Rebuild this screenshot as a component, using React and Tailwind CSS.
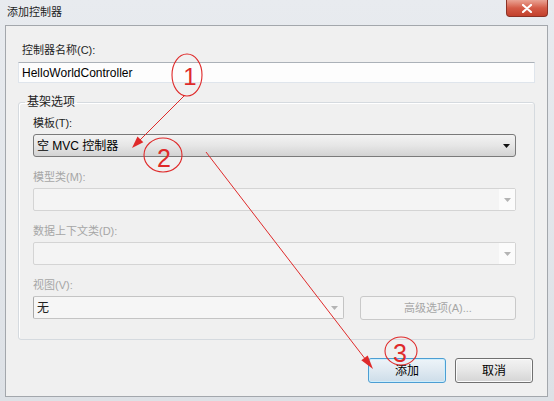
import React from "react";

const cjk = "font-['Liberation_Sans','Noto_Sans_CJK_SC',sans-serif]";

function Caret({ color }) {
  return (
    <svg width="7" height="4" viewBox="0 0 7 4">
      <polygon points="0,0 7,0 3.5,4" fill={color} />
    </svg>
  );
}

function Label({ children, disabled }) {
  return (
    <div
      className={`h-[16px] text-[11px] leading-[16px] ${
        disabled ? "text-[#a6a6a6]" : "text-[#1e1e1e]"
      }`}
    >
      {children}
    </div>
  );
}

function DisabledCombo() {
  return (
    <div className="mt-[3px] flex h-[23px] rounded-[2px] border border-[#d4d4d4] bg-[#f4f4f4]">
      <div className="flex-1" />
      <div className="flex w-[16px] items-center justify-center bg-[#fbfbfb]">
        <Caret color="#b4b4b4" />
      </div>
    </div>
  );
}

function Annotations() {
  const red = "#df2a2a";
  return (
    <svg
      className="pointer-events-none absolute inset-0"
      width="554"
      height="401"
      viewBox="0 0 554 401"
    >
      <ellipse cx="187" cy="75" rx="15" ry="21" fill="none" stroke={red} strokeWidth="1.1" />
      <text x="190" y="85" fontSize="24" fill={red} textAnchor="middle" fontFamily="Liberation Sans">
        1
      </text>
      <line x1="185" y1="95" x2="137" y2="143" stroke={red} strokeWidth="1" />
      <polygon points="132,148 143.3,142.2 137.5,136.6" fill={red} />

      <ellipse cx="163" cy="155" rx="19" ry="17" fill="none" stroke={red} strokeWidth="1.1" />
      <text x="164" y="167" fontSize="25" fill={red} textAnchor="middle" fontFamily="Liberation Sans">
        2
      </text>
      <line x1="206" y1="152" x2="366" y2="360" stroke={red} strokeWidth="1" />
      <polygon points="373,369 367.7,355.5 361.3,360.3" fill={red} />

      <ellipse cx="401" cy="351" rx="16" ry="14" fill="none" stroke={red} strokeWidth="1.1" />
      <text x="400" y="362" fontSize="25" fill={red} textAnchor="middle" fontFamily="Liberation Sans">
        3
      </text>
    </svg>
  );
}

export default function App() {
  return (
    <div
      className={`relative h-[401px] w-[554px] overflow-hidden bg-gradient-to-b from-[#e8ebef] to-[#dde1e6] ${cjk}`}
    >
      {/* Title bar */}
      <div className="flex h-[25px] items-start justify-between pl-[7px] pr-[6px]">
        <span className="pt-[4px] text-[11px] leading-[16px] text-[#1e1e1e]">添加控制器</span>
        <div className="flex h-[17px] w-[42px] items-center justify-center rounded-b-[4px] border border-t-0 border-[#8b3226] bg-gradient-to-b from-[#e9a394] via-[#d45b47] to-[#c2402c]">
          <svg width="10" height="9" viewBox="0 0 10 9">
            <path d="M1 1 L9 8 M9 1 L1 8" stroke="#fff" strokeWidth="2.2" strokeLinecap="round" />
          </svg>
        </div>
      </div>

      {/* Client area */}
      <div className="ml-[5px] h-[372px] w-[543px] border border-[#a3a7ac] bg-[#f0f0f0] px-[12px] pt-[16px]">
        <div className="ml-[4px]">
          <Label>控制器名称(C):</Label>
        </div>
        <div className="mt-[4px] flex h-[21px] items-center border border-[#dfe5ec] border-t-[#abb1b8] bg-[#fdfdfd] pl-[3px] text-[12px] text-black">
          HelloWorldController
        </div>

        {/* Group box */}
        <fieldset className="mt-[11px] h-[246px] rounded-[3px] border border-[#d5dadf] pl-[14px] pr-[18px] pt-[5px] shadow-[inset_1px_1px_0_#ffffff]">
          <legend className="-ml-[8px] px-[2px] text-[12px] leading-[16px] text-[#1e1e1e]">基架选项</legend>

          <Label>模板(T):</Label>
          <div className="mt-[3px] flex h-[23px] items-center rounded-[3px] border border-[#7a7a7a] bg-gradient-to-b from-[#f3f3f3] via-[#e6e6e6] to-[#d3d3d3] pl-[3px] pr-[5px] text-[12px] text-black">
            <span className="flex-1">空 MVC 控制器</span>
            <Caret color="#111" />
          </div>

          <div className="mt-[12px]">
            <Label disabled>模型类(M):</Label>
            <DisabledCombo />
          </div>

          <div className="mt-[12px]">
            <Label disabled>数据上下文类(D):</Label>
            <DisabledCombo />
          </div>

          <div className="mt-[12px]">
            <Label disabled>视图(V):</Label>
            <div className="mt-[3px] flex items-start">
              <div className="flex h-[23px] w-[311px] items-center rounded-[2px] border border-[#c4c4c4] border-l-[#a9a9a9] bg-[#f6f6f6] pl-[3px] pr-[5px] text-[12px] text-[#222]">
                <span className="flex-1">无</span>
                <Caret color="#b4b4b4" />
              </div>
              <div className="ml-auto flex h-[24px] w-[156px] items-center justify-center rounded-[3px] border border-[#c9c9c9] bg-[#f4f4f4] text-[11px] text-[#a6a6a6]">
                高级选项(A)...
              </div>
            </div>
          </div>
        </fieldset>

        {/* Buttons */}
        <div className="mt-[18px] flex justify-end gap-[9px] pr-[2px]">
          <button className="flex h-[25px] w-[78px] items-center justify-center rounded-[3px] border border-[#4c9ed3] bg-gradient-to-b from-[#edf4f9] via-[#dfe9f1] to-[#cddde9] text-[12px] text-black shadow-[inset_0_0_0_1px_#cdeefc]">
            添加
          </button>
          <button className="flex h-[25px] w-[78px] items-center justify-center rounded-[3px] border border-[#707070] bg-gradient-to-b from-[#f3f3f3] via-[#e6e6e6] to-[#d4d4d4] text-[12px] text-black shadow-[inset_0_0_0_1px_#fbfbfb]">
            取消
          </button>
        </div>
      </div>

      <Annotations />
    </div>
  );
}
